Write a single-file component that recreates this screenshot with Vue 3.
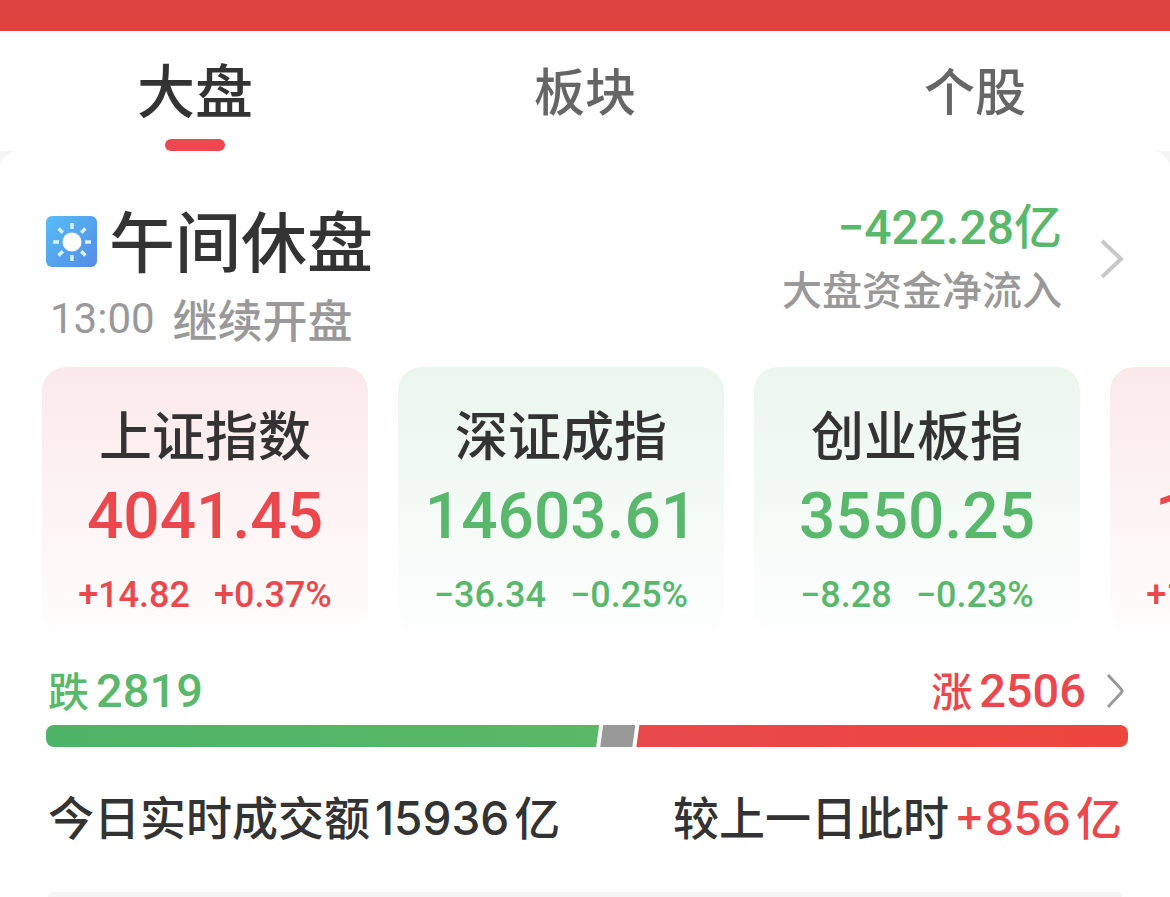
<script setup>
import { ref } from 'vue'

const tabs = ['大盘', '板块', '个股']
const active = ref('大盘')

const indices = [
  { name: '上证指数', value: '4041.45', change: '+14.82', percent: '+0.37%', trend: 'up' },
  { name: '深证成指', value: '14603.61', change: '−36.34', percent: '−0.25%', trend: 'down' },
  { name: '创业板指', value: '3550.25', change: '−8.28', percent: '−0.23%', trend: 'down' },
  { name: '科创50', value: '1411.19', change: '+10.12', percent: '+0.72%', trend: 'up' },
]

const breadth = { down: 2819, flat: 179, up: 2506 }
const rays = [0, 45, 90, 135, 180, 225, 270, 315]
</script>

<template>
  <div class="page">
    <div class="banner"></div>
    <nav class="tabs">
      <button
        v-for="tab in tabs"
        :key="tab"
        type="button"
        class="tab"
        :class="{ active: tab === active }"
        @click="active = tab"
      >{{ tab }}</button>
    </nav>

    <main class="panel">
      <header class="status">
        <div class="session">
          <h1 class="title">
            <svg class="sun" viewBox="0 0 51 51" aria-hidden="true">
              <defs>
                <linearGradient id="sky" x1="0" y1="0" x2="1" y2="1">
                  <stop offset="0" stop-color="#56bdf8" />
                  <stop offset="1" stop-color="#558be4" />
                </linearGradient>
              </defs>
              <rect width="51" height="51" rx="6" fill="url(#sky)" />
              <circle cx="26" cy="26" r="9.5" fill="#fff" />
              <rect
                v-for="angle in rays"
                :key="angle"
                x="24.3"
                y="7"
                width="3.4"
                height="6"
                fill="#d9f6ff"
                :transform="`rotate(${angle} 26 26)`"
              />
            </svg>
            <span>午间休盘</span>
          </h1>
          <p class="reopen"><span class="clock">13:00</span><span>继续开盘</span></p>
        </div>
        <a class="flow" href="#flow">
          <span class="flow-text">
            <span class="amount">−422.28<span class="unit">亿</span></span>
            <span class="flow-label">大盘资金净流入</span>
          </span>
          <svg class="chevron" viewBox="0 0 24 40" aria-hidden="true">
            <path d="M2 2 L21 20 L2 38" fill="none" stroke="#c8c8c8" stroke-width="4" />
          </svg>
        </a>
      </header>

      <section class="cards">
        <article v-for="item in indices" :key="item.name" class="card" :class="item.trend">
          <h2 class="name">{{ item.name }}</h2>
          <p class="value">{{ item.value }}</p>
          <p class="delta"><span>{{ item.change }}</span><span>{{ item.percent }}</span></p>
        </article>
      </section>

      <section class="breadth">
        <a class="counts" href="#breadth">
          <span class="count fall"><span class="word">跌</span>{{ breadth.down }}</span>
          <span class="count rise">
            <span><span class="word">涨</span>{{ breadth.up }}</span>
            <svg class="chevron-small" viewBox="0 0 18 36" aria-hidden="true">
              <path d="M2 2 L15 16 Q17 18 15 20 L2 34" fill="none" stroke="#999" stroke-width="3" />
            </svg>
          </span>
        </a>
        <div class="bar">
          <span class="segment bar-down" :style="{ flexGrow: breadth.down }"></span>
          <span class="segment bar-flat" :style="{ flexGrow: breadth.flat }"></span>
          <span class="segment bar-up" :style="{ flexGrow: breadth.up }"></span>
        </div>
      </section>

      <section class="volume">
        <p class="turnover">今日实时成交额<span class="figure">15936</span>亿</p>
        <p class="turnover">较上一日此时<span class="gain"><span class="figure">+856</span>亿</span></p>
      </section>

      <section class="next"></section>
    </main>
  </div>
</template>

<style>
body {
  margin: 0;
  background: #f5f5f5;
}
</style>

<style scoped>
.page {
  display: flex;
  flex-direction: column;
  min-height: 100vh;
  overflow: hidden;
  color: #333;
  font-family: "Noto Sans CJK SC", sans-serif;
  font-weight: 500;
}
h1, h2, p {
  margin: 0;
  font-weight: 500;
}
a {
  color: inherit;
  text-decoration: none;
}
.banner {
  height: 31px;
  background: #de4340;
}
.tabs {
  display: grid;
  grid-template-columns: repeat(3, 1fr);
  height: 120px;
  background: #fff;
}
.tab {
  position: relative;
  padding: 0 0 4px;
  border: 0;
  background: none;
  color: #666;
  font: 500 51px/108px "Noto Sans CJK SC", sans-serif;
}
.tab.active {
  padding-bottom: 6px;
  color: #333;
  font-size: 58px;
}
.tab.active::after {
  content: "";
  position: absolute;
  bottom: 0;
  left: 50%;
  width: 60px;
  height: 12px;
  margin-left: -30px;
  border-radius: 6px;
  background: #ed4750;
}
.panel {
  flex: 1;
  display: flex;
  flex-direction: column;
  border-radius: 18px 18px 0 0;
  background: #fff;
}
.status {
  display: flex;
  justify-content: space-between;
  align-items: flex-start;
  padding: 51px 46px 22px;
}
.title {
  display: flex;
  align-items: baseline;
  gap: 12px;
  font-size: 66px;
  line-height: 72px;
}
.sun {
  width: 51px;
  height: 51px;
}
.reopen {
  display: flex;
  align-items: center;
  gap: 18px;
  margin-top: 19px;
  padding-left: 4px;
  color: #999;
  font-size: 45px;
  line-height: 52px;
}
.clock {
  font-family: Roboto, sans-serif;
  font-weight: 400;
  font-size: 42px;
}
.flow {
  display: flex;
  align-items: center;
  gap: 38px;
}
.flow-text {
  display: flex;
  flex-direction: column;
  align-items: flex-end;
  gap: 6px;
}
.amount {
  color: #5ab86c;
  font-family: Roboto, sans-serif;
  font-size: 48px;
  line-height: 52px;
}
.unit {
  font-family: "Noto Sans CJK SC", sans-serif;
  line-height: 0;
}
.flow-label {
  color: #999;
  font-size: 40px;
  line-height: 56px;
}
.chevron {
  width: 24px;
  height: 40px;
}
.cards {
  display: flex;
  gap: 30px;
  padding: 0 42px;
  overflow: hidden;
}
.card {
  flex: 0 0 326px;
  box-sizing: border-box;
  padding: 36px 0 16px;
  border-radius: 24px;
  text-align: center;
}
.card.up {
  background: linear-gradient(#fbe9ea, #fffdfd);
}
.card.down {
  background: linear-gradient(#eaf6ee, #fdfefe);
}
.name {
  font-size: 53px;
  line-height: 60px;
}
.value {
  margin-top: 18px;
  font: 500 64px/72px Roboto, sans-serif;
}
.delta {
  display: flex;
  justify-content: center;
  gap: 24px;
  margin-top: 20px;
  font: 500 36px/44px Roboto, sans-serif;
}
.up .value, .up .delta, .rise, .gain {
  color: #eb484e;
}
.down .value, .down .delta, .fall {
  color: #5ab86c;
}
.breadth {
  padding: 34px 42px 0 46px;
}
.counts {
  display: flex;
  justify-content: space-between;
  padding: 0 4px 0 2px;
}
.count {
  font: 500 47px/48px Roboto, sans-serif;
}
.rise {
  display: flex;
  align-items: center;
  gap: 20px;
}
.word {
  margin-right: 7px;
  font-family: "Noto Sans CJK SC", sans-serif;
  font-size: 41px;
  line-height: 0;
}
.chevron-small {
  width: 18px;
  height: 36px;
}
.bar {
  display: flex;
  height: 22px;
  margin-top: 10px;
  border-radius: 8px;
  overflow: hidden;
}
.segment {
  flex-basis: 0;
}
.bar-down {
  background: linear-gradient(90deg, #4db366, #5ab868);
  clip-path: polygon(0 0, calc(100% - 1px) 0, calc(100% - 4px) 100%, 0 100%);
}
.bar-flat {
  background: #999;
  clip-path: polygon(3px 0, 100% 0, calc(100% - 3px) 100%, 0 100%);
}
.bar-up {
  background: linear-gradient(90deg, #e8494b, #ed463e);
  clip-path: polygon(4px 0, 100% 0, 100% 100%, 1px 100%);
}
.volume {
  display: flex;
  justify-content: space-between;
  padding: 40px 48px 0;
}
.turnover {
  font-size: 46px;
  line-height: 56px;
  white-space: nowrap;
}
.figure {
  margin: 0 5px;
  font-family: Inter, sans-serif;
  font-size: 46px;
  line-height: 0;
}
.next {
  flex: 1;
  min-height: 5px;
  margin: 49px 48px 0;
  border-radius: 12px 12px 0 0;
  background: #f5f5f5;
}
</style>
